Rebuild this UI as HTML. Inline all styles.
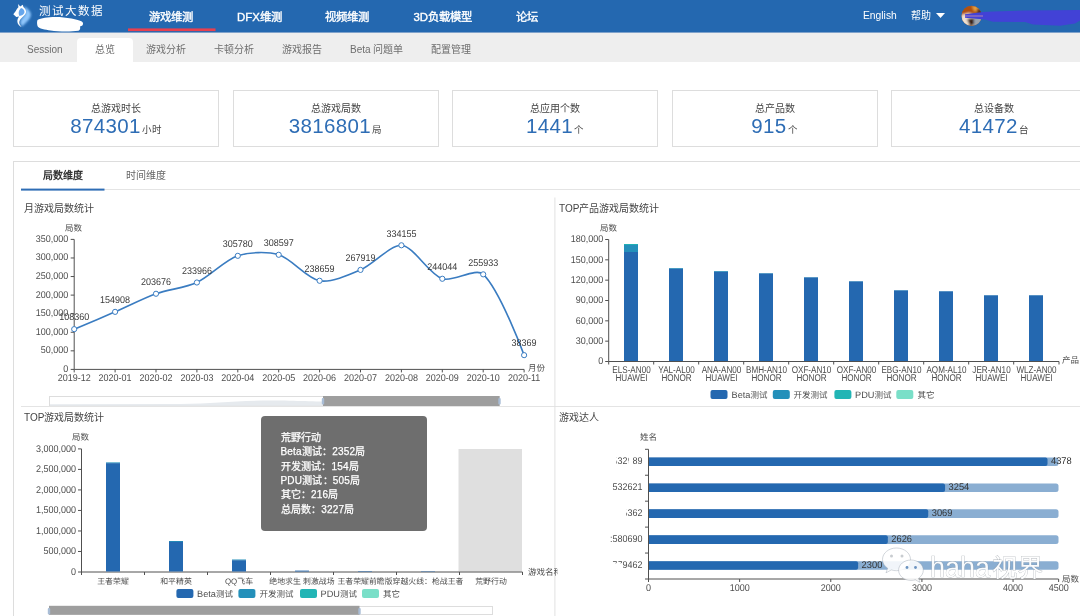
<!DOCTYPE html>
<html lang="zh-CN"><head><meta charset="utf-8"><title>测试大数据</title>
<style>
html,body{margin:0;padding:0}
#root{position:absolute;left:0;top:0;width:1080px;height:616px;will-change:transform}
body{width:1080px;height:616px;overflow:hidden;background:#fff;font-family:"Liberation Sans",sans-serif;position:relative;color:#444}
.abs{position:absolute;white-space:nowrap}
#hdr{left:0;top:0;width:1080px;height:32px;background:#2468b0}
#hdr .nav{color:#fff;font-size:11.3px;font-weight:normal;-webkit-text-stroke:.35px #fff;top:10px;line-height:14px}
#hdr .nav i{font-style:normal;font-size:11.4px}
#sub{left:0;top:32px;width:1080px;height:30px;background:linear-gradient(#7fa2cb 0,#7fa2cb 1px,#eee 1px,#eee 30px)}
#sub .it{font-size:10px;color:#6e6e6e;top:12px;line-height:12px}
.card{top:90px;width:204px;height:55px;border:1px solid #ddd;background:#fff;text-align:center}
.card .t{font-size:10px;color:#444;margin-top:11.500px;line-height:12px}
.card .n{font-size:20.5px;color:#2e6db5;line-height:20px;margin-top:1px;letter-spacing:.35px}
.card .n span{font-size:9.5px;color:#444;margin-left:1px;letter-spacing:0}
svg text{font-family:"Liberation Sans",sans-serif;text-rendering:geometricPrecision}
</style></head><body><div id="root">
<div id="hdr" class="abs">
  <svg class="abs" style="left:0;top:0" width="110" height="32" viewBox="0 0 110 32">
    <defs><radialGradient id="glow" cx="50%" cy="50%" r="50%"><stop offset="0" stop-color="#5fa8ee" stop-opacity=".9"/><stop offset="1" stop-color="#2468b0" stop-opacity="0"/></radialGradient><filter id="b1" x="-30%" y="-30%" width="160%" height="160%"><feGaussianBlur stdDeviation=".9"/></filter><filter id="b0" x="-20%" y="-20%" width="140%" height="140%"><feGaussianBlur stdDeviation=".45"/></filter><filter id="b2" x="-20%" y="-20%" width="140%" height="140%"><feGaussianBlur stdDeviation=".6"/></filter></defs>
    <g transform="translate(8,0)">
      <ellipse cx="15" cy="15" rx="11" ry="13.500" fill="url(#glow)" opacity=".5"/>
      <path d="M15.500 6.500C19 7.500 23.400 11.500 22.800 15.500 22.100 19.800 17 23 14.200 26.600 12.300 24.500 11.800 22 13 20 14.500 17.500 17.500 15.500 17.500 12.500 17.500 10 16.500 8 15.500 6.500z" fill="#8fc6fb" filter="url(#b1)"/>
      <path d="M10.100 4.100L12.200 6.400 14.800 4.800 15.400 7C17.100 8.500 18.400 10.500 18 12.600 17.500 15.100 14.600 16.900 12.900 18.700 11.600 20.100 11.100 21.600 11.300 23.100 11.500 24.600 12.400 25.900 13.600 27.100 11.500 26.400 9.700 24.400 9.400 22.100 9.100 19.600 10.200 17.900 11.200 16.600L8.300 17 5.300 14.300 7.800 10.900C8.500 9.500 9.500 8.200 10.400 7.300z" fill="#fff" filter="url(#b0)"/>
      <path d="M13 7.900C15 8.200 16.600 10 16.500 12.200 16.400 14.200 14 15.400 11.400 15.900 10.600 14.500 10.400 12.500 11.200 10.600 11.700 9.500 12.300 8.600 13 7.900z" fill="#66a6ec" filter="url(#b2)"/>
    </g>
    <path d="M37.5 20c6-3.500 22-4 34-1.500 6 1.200 11 2.500 11.500 4.500.4 2-1 3.200-3 3.500.5 1.500.2 3.500-1.500 4.300-8 1.200-20 1-28-.3-5-.8-12-1.800-13-4.500-.6-2.200-.6-4.500 0-6z" fill="#fff"/>
  </svg>
  <div class="abs" style="left:39px;top:4px;font-size:11.500px;letter-spacing:1.900px;color:#fff;line-height:14px">测试大数据</div>
  <div class="abs nav" style="left:148.500px">游戏维测</div>
  <div class="abs nav" style="left:237px"><i>DFX</i>维测</div>
  <div class="abs nav" style="left:325px">视频维测</div>
  <div class="abs nav" style="left:413.500px"><i>3D</i>负载模型</div>
  <div class="abs nav" style="left:516px">论坛</div>
  <div class="abs" style="left:863px;top:10px;font-size:10.300px;color:#fff;line-height:12px">English</div>
  <div class="abs" style="left:911px;top:10px;font-size:10px;color:#fff;line-height:12px">帮助</div>
  <svg class="abs" style="left:935px;top:12px" width="11" height="7" viewBox="0 0 11 7"><path d="M1 1h9l-4.500 5z" fill="#fff"/></svg>
  <svg class="abs" style="left:955px;top:0" width="125" height="32" viewBox="0 0 125 32">
    <defs><clipPath id="avc"><circle cx="16.600" cy="15.900" r="10.100"/></clipPath><filter id="b3"><feGaussianBlur stdDeviation=".8"/></filter></defs>
    <g clip-path="url(#avc)"><rect x="5" y="4" width="24" height="24" fill="#a85a22"/>
      <g filter="url(#b3)"><path d="M6 6h22v7l-8-2-7 3-7 2z" fill="#b0500f"/><path d="M17 6h8l1 6-7-1z" fill="#e8a040"/><path d="M6 15l8-2 6 3-1 10H6z" fill="#efe0d0"/><path d="M12 19l7-1 2 6-6 2z" fill="#3a2018"/><path d="M19 18l8-2v10h-8z" fill="#9aa4b0"/><path d="M22 8l6 2v7l-6-2z" fill="#5a3020"/></g></g>
    <path d="M10 14.200L28 12 38 11.400 70 10.500 125 10V20.500L120 23.500 105 25.700 78 24.600 70 22 38 21.700 30 19.500 10 17.800z" fill="#4242d6"/>
    <path d="M10 16h18" stroke="#c890b0" stroke-width="1.200" opacity=".7"/>
  </svg>
</div>
<div id="sub" class="abs">
  <div class="abs" style="left:77px;top:6px;width:56px;height:24px;background:#fff;border-radius:4px 4px 0 0"></div>
  <div class="abs it" style="left:27px">Session</div>
  <div class="abs it" style="left:95px">总览</div>
  <div class="abs it" style="left:146px">游戏分析</div>
  <div class="abs it" style="left:214px">卡顿分析</div>
  <div class="abs it" style="left:282px">游戏报告</div>
  <div class="abs it" style="left:350px">Beta 问题单</div>
  <div class="abs it" style="left:431px">配置管理</div>
</div>

<div class="abs card" style="left:13px"><div class="t">总游戏时长</div><div class="n">874301<span>小时</span></div></div>
<div class="abs card" style="left:232.500px"><div class="t">总游戏局数</div><div class="n">3816801<span>局</span></div></div>
<div class="abs card" style="left:452px"><div class="t">总应用个数</div><div class="n">1441<span>个</span></div></div>
<div class="abs card" style="left:671.500px"><div class="t">总产品数</div><div class="n">915<span>个</span></div></div>
<div class="abs card" style="left:891px"><div class="t">总设备数</div><div class="n">41472<span>台</span></div></div>

<div class="abs" style="left:13px;top:161px;width:1100px;height:480px;border:1px solid #ddd;background:#fff"></div>
<div class="abs" style="left:21px;top:189px;width:1059px;height:1px;background:#e4e4e4"></div>
<div class="abs" style="left:42.500px;top:170px;font-size:10px;font-weight:bold;color:#333;line-height:12px">局数维度</div>
<div class="abs" style="left:126.300px;top:170px;font-size:10px;color:#666;line-height:12px">时间维度</div>
<div class="abs" style="left:21px;top:406px;width:1059px;height:1px;background:#e4e4e4"></div>
<div class="abs" style="left:24px;top:203px;font-size:10px;color:#444;line-height:12px">月游戏局数统计</div>
<div class="abs" style="left:559px;top:203px;font-size:10px;color:#444;line-height:12px">TOP产品游戏局数统计</div>
<div class="abs" style="left:24px;top:411.500px;font-size:10px;color:#444;line-height:12px">TOP游戏局数统计</div>
<div class="abs" style="left:559px;top:411.500px;font-size:10px;color:#444;line-height:12px">游戏达人</div>

<svg class="abs" style="left:0;top:0" width="1080" height="616" viewBox="0 0 1080 616">
<rect x="554.400" y="197.500" width="1" height="419" fill="#e2e2e2"/>
<rect x="128" y="28.400" width="87.500" height="2.700" fill="#e8404f"/>
<rect x="21" y="188.600" width="83.500" height="2" fill="#2e6db5"/>
<path d="M74.2 239.4V369.4H524.1" fill="none" stroke="#505050" stroke-width="1"/>
<path d="M70.7 369.40H74.2" stroke="#505050" stroke-width="1"/>
<text transform="translate(68.2 371.9) scale(0.918 1)" font-size="9.8" text-anchor="end" fill="#4d4d4d" font-weight="normal" >0</text>
<path d="M70.7 350.83H74.2" stroke="#505050" stroke-width="1"/>
<text transform="translate(68.2 353.33) scale(0.918 1)" font-size="9.8" text-anchor="end" fill="#4d4d4d" font-weight="normal" >50,000</text>
<path d="M70.7 332.26H74.2" stroke="#505050" stroke-width="1"/>
<text transform="translate(68.2 334.76) scale(0.918 1)" font-size="9.8" text-anchor="end" fill="#4d4d4d" font-weight="normal" >100,000</text>
<path d="M70.7 313.69H74.2" stroke="#505050" stroke-width="1"/>
<text transform="translate(68.2 316.19) scale(0.918 1)" font-size="9.8" text-anchor="end" fill="#4d4d4d" font-weight="normal" >150,000</text>
<path d="M70.7 295.11H74.2" stroke="#505050" stroke-width="1"/>
<text transform="translate(68.2 297.61) scale(0.918 1)" font-size="9.8" text-anchor="end" fill="#4d4d4d" font-weight="normal" >200,000</text>
<path d="M70.7 276.54H74.2" stroke="#505050" stroke-width="1"/>
<text transform="translate(68.2 279.04) scale(0.918 1)" font-size="9.8" text-anchor="end" fill="#4d4d4d" font-weight="normal" >250,000</text>
<path d="M70.7 257.97H74.2" stroke="#505050" stroke-width="1"/>
<text transform="translate(68.2 260.47) scale(0.918 1)" font-size="9.8" text-anchor="end" fill="#4d4d4d" font-weight="normal" >300,000</text>
<path d="M70.7 239.40H74.2" stroke="#505050" stroke-width="1"/>
<text transform="translate(68.2 241.9) scale(0.918 1)" font-size="9.8" text-anchor="end" fill="#4d4d4d" font-weight="normal" >350,000</text>
<path d="M74.2 369.4V372.4" stroke="#505050" stroke-width="1"/>
<text transform="translate(74.2 380.9) scale(0.918 1)" font-size="9.8" text-anchor="middle" fill="#4d4d4d" font-weight="normal" >2019-12</text>
<path d="M115.1 369.4V372.4" stroke="#505050" stroke-width="1"/>
<text transform="translate(115.1 380.9) scale(0.918 1)" font-size="9.8" text-anchor="middle" fill="#4d4d4d" font-weight="normal" >2020-01</text>
<path d="M156.0 369.4V372.4" stroke="#505050" stroke-width="1"/>
<text transform="translate(156.0 380.9) scale(0.918 1)" font-size="9.8" text-anchor="middle" fill="#4d4d4d" font-weight="normal" >2020-02</text>
<path d="M196.89999999999998 369.4V372.4" stroke="#505050" stroke-width="1"/>
<text transform="translate(196.9 380.9) scale(0.918 1)" font-size="9.8" text-anchor="middle" fill="#4d4d4d" font-weight="normal" >2020-03</text>
<path d="M237.8 369.4V372.4" stroke="#505050" stroke-width="1"/>
<text transform="translate(237.8 380.9) scale(0.918 1)" font-size="9.8" text-anchor="middle" fill="#4d4d4d" font-weight="normal" >2020-04</text>
<path d="M278.7 369.4V372.4" stroke="#505050" stroke-width="1"/>
<text transform="translate(278.7 380.9) scale(0.918 1)" font-size="9.8" text-anchor="middle" fill="#4d4d4d" font-weight="normal" >2020-05</text>
<path d="M319.59999999999997 369.4V372.4" stroke="#505050" stroke-width="1"/>
<text transform="translate(319.6 380.9) scale(0.918 1)" font-size="9.8" text-anchor="middle" fill="#4d4d4d" font-weight="normal" >2020-06</text>
<path d="M360.5 369.4V372.4" stroke="#505050" stroke-width="1"/>
<text transform="translate(360.5 380.9) scale(0.918 1)" font-size="9.8" text-anchor="middle" fill="#4d4d4d" font-weight="normal" >2020-07</text>
<path d="M401.4 369.4V372.4" stroke="#505050" stroke-width="1"/>
<text transform="translate(401.4 380.9) scale(0.918 1)" font-size="9.8" text-anchor="middle" fill="#4d4d4d" font-weight="normal" >2020-08</text>
<path d="M442.29999999999995 369.4V372.4" stroke="#505050" stroke-width="1"/>
<text transform="translate(442.3 380.9) scale(0.918 1)" font-size="9.8" text-anchor="middle" fill="#4d4d4d" font-weight="normal" >2020-09</text>
<path d="M483.2 369.4V372.4" stroke="#505050" stroke-width="1"/>
<text transform="translate(483.2 380.9) scale(0.918 1)" font-size="9.8" text-anchor="middle" fill="#4d4d4d" font-weight="normal" >2020-10</text>
<path d="M524.1 369.4V372.4" stroke="#505050" stroke-width="1"/>
<text transform="translate(524.1 380.9) scale(0.918 1)" font-size="9.8" text-anchor="middle" fill="#4d4d4d" font-weight="normal" >2020-11</text>
<text x="65" y="230.5" font-size="8.5" text-anchor="start" fill="#4d4d4d" font-weight="normal" >局数</text>
<text x="528" y="371.2" font-size="8.5" text-anchor="start" fill="#4d4d4d" font-weight="normal" >月份</text>
<path d="M74.20 329.15C74.20 329.15 102.88 317.15 115.10 311.86C127.42 306.53 143.40 298.27 156.00 293.75C167.94 289.46 185.49 287.79 196.90 282.50C210.03 276.41 224.45 260.35 237.80 255.82C248.99 252.03 267.47 251.35 278.70 254.78C292.01 258.83 306.50 278.34 319.60 280.76C331.04 282.87 348.97 274.89 360.50 269.89C373.51 264.25 389.75 245.29 401.40 245.29C414.29 246.68 428.50 273.85 442.30 278.76C453.04 282.57 475.54 267.18 483.20 274.34C500.08 290.10 524.10 355.15 524.10 355.15" fill="none" stroke="#3a7cc1" stroke-width="1.6"/>
<circle cx="74.20" cy="329.15" r="2.6" fill="#fff" stroke="#3a7cc1" stroke-width="1"/>
<text transform="translate(74.2 320.45) scale(0.918 1)" font-size="9.8" text-anchor="middle" fill="#3a3a3a" font-weight="normal" >108360</text>
<circle cx="115.10" cy="311.86" r="2.6" fill="#fff" stroke="#3a7cc1" stroke-width="1"/>
<text transform="translate(115.1 303.16) scale(0.918 1)" font-size="9.8" text-anchor="middle" fill="#3a3a3a" font-weight="normal" >154908</text>
<circle cx="156.00" cy="293.75" r="2.6" fill="#fff" stroke="#3a7cc1" stroke-width="1"/>
<text transform="translate(156.0 285.05) scale(0.918 1)" font-size="9.8" text-anchor="middle" fill="#3a3a3a" font-weight="normal" >203676</text>
<circle cx="196.90" cy="282.50" r="2.6" fill="#fff" stroke="#3a7cc1" stroke-width="1"/>
<text transform="translate(196.9 273.8) scale(0.918 1)" font-size="9.8" text-anchor="middle" fill="#3a3a3a" font-weight="normal" >233966</text>
<circle cx="237.80" cy="255.82" r="2.6" fill="#fff" stroke="#3a7cc1" stroke-width="1"/>
<text transform="translate(237.8 247.12) scale(0.918 1)" font-size="9.8" text-anchor="middle" fill="#3a3a3a" font-weight="normal" >305780</text>
<circle cx="278.70" cy="254.78" r="2.6" fill="#fff" stroke="#3a7cc1" stroke-width="1"/>
<text transform="translate(278.7 246.08) scale(0.918 1)" font-size="9.8" text-anchor="middle" fill="#3a3a3a" font-weight="normal" >308597</text>
<circle cx="319.60" cy="280.76" r="2.6" fill="#fff" stroke="#3a7cc1" stroke-width="1"/>
<text transform="translate(319.6 272.06) scale(0.918 1)" font-size="9.8" text-anchor="middle" fill="#3a3a3a" font-weight="normal" >238659</text>
<circle cx="360.50" cy="269.89" r="2.6" fill="#fff" stroke="#3a7cc1" stroke-width="1"/>
<text transform="translate(360.5 261.19) scale(0.918 1)" font-size="9.8" text-anchor="middle" fill="#3a3a3a" font-weight="normal" >267919</text>
<circle cx="401.40" cy="245.29" r="2.6" fill="#fff" stroke="#3a7cc1" stroke-width="1"/>
<text transform="translate(401.4 236.59) scale(0.918 1)" font-size="9.8" text-anchor="middle" fill="#3a3a3a" font-weight="normal" >334155</text>
<circle cx="442.30" cy="278.76" r="2.6" fill="#fff" stroke="#3a7cc1" stroke-width="1"/>
<text transform="translate(442.3 270.06) scale(0.918 1)" font-size="9.8" text-anchor="middle" fill="#3a3a3a" font-weight="normal" >244044</text>
<circle cx="483.20" cy="274.34" r="2.6" fill="#fff" stroke="#3a7cc1" stroke-width="1"/>
<text transform="translate(483.2 265.64) scale(0.918 1)" font-size="9.8" text-anchor="middle" fill="#3a3a3a" font-weight="normal" >255933</text>
<circle cx="524.10" cy="355.15" r="2.6" fill="#fff" stroke="#3a7cc1" stroke-width="1"/>
<text transform="translate(524.1 346.45) scale(0.918 1)" font-size="9.8" text-anchor="middle" fill="#3a3a3a" font-weight="normal" >38369</text>
<rect x="49.5" y="396.5" width="450" height="9" fill="#fff" stroke="#ddd" stroke-width="1"/>
<path d="M50 405.700L50 404.200L180 404C215 403.500 235 400.600 270 400.600C300 400.600 310 401.800 340 401.800L499 402L499 405.700Z" fill="#e6eaee"/>
<rect x="323" y="396" width="176.5" height="10" fill="#9e9e9e"/>
<rect x="321.8" y="398" width="2.4" height="6.5" rx="1" fill="#a9bdd6"/>
<rect x="498.3" y="398" width="2.4" height="6.5" rx="1" fill="#a9bdd6"/>
<path d="M608.7 239.5V361.5H1059" fill="none" stroke="#505050" stroke-width="1"/>
<path d="M605.2 361.50H608.7" stroke="#505050" stroke-width="1"/>
<text transform="translate(603.2 364.3) scale(0.918 1)" font-size="9.8" text-anchor="end" fill="#4d4d4d" font-weight="normal" >0</text>
<path d="M605.2 341.17H608.7" stroke="#505050" stroke-width="1"/>
<text transform="translate(603.2 343.97) scale(0.918 1)" font-size="9.8" text-anchor="end" fill="#4d4d4d" font-weight="normal" >30,000</text>
<path d="M605.2 320.83H608.7" stroke="#505050" stroke-width="1"/>
<text transform="translate(603.2 323.63) scale(0.918 1)" font-size="9.8" text-anchor="end" fill="#4d4d4d" font-weight="normal" >60,000</text>
<path d="M605.2 300.50H608.7" stroke="#505050" stroke-width="1"/>
<text transform="translate(603.2 303.3) scale(0.918 1)" font-size="9.8" text-anchor="end" fill="#4d4d4d" font-weight="normal" >90,000</text>
<path d="M605.2 280.17H608.7" stroke="#505050" stroke-width="1"/>
<text transform="translate(603.2 282.97) scale(0.918 1)" font-size="9.8" text-anchor="end" fill="#4d4d4d" font-weight="normal" >120,000</text>
<path d="M605.2 259.83H608.7" stroke="#505050" stroke-width="1"/>
<text transform="translate(603.2 262.63) scale(0.918 1)" font-size="9.8" text-anchor="end" fill="#4d4d4d" font-weight="normal" >150,000</text>
<path d="M605.2 239.50H608.7" stroke="#505050" stroke-width="1"/>
<text transform="translate(603.2 242.3) scale(0.918 1)" font-size="9.8" text-anchor="end" fill="#4d4d4d" font-weight="normal" >180,000</text>
<path d="M608.7 361.5V364.5" stroke="#505050" stroke-width="1"/>
<rect x="624.0" y="244" width="14" height="8" fill="#2490ba"/>
<rect x="624.0" y="244" width="14" height="0.9" fill="#22b5b5"/>
<rect x="624.0" y="252" width="14" height="109.0" fill="#2468b0"/>
<text transform="translate(631.5 373.0) scale(0.827 1)" font-size="9.8" text-anchor="middle" fill="#4d4d4d" font-weight="normal" >ELS-AN00</text>
<text transform="translate(631.5 380.6) scale(0.827 1)" font-size="9.8" text-anchor="middle" fill="#4d4d4d" font-weight="normal" >HUAWEI</text>
<path d="M653.7 361.5V364.5" stroke="#505050" stroke-width="1"/>
<rect x="669.0" y="268" width="14" height="0.8000000000000114" fill="#2490ba"/>
<rect x="669.0" y="268.8" width="14" height="92.19999999999999" fill="#2468b0"/>
<text transform="translate(676.5 373.0) scale(0.827 1)" font-size="9.8" text-anchor="middle" fill="#4d4d4d" font-weight="normal" >YAL-AL00</text>
<text transform="translate(676.5 380.6) scale(0.827 1)" font-size="9.8" text-anchor="middle" fill="#4d4d4d" font-weight="normal" >HONOR</text>
<path d="M698.7 361.5V364.5" stroke="#505050" stroke-width="1"/>
<rect x="714.0" y="271" width="14" height="0.8000000000000114" fill="#2490ba"/>
<rect x="714.0" y="271.8" width="14" height="89.19999999999999" fill="#2468b0"/>
<text transform="translate(721.5 373.0) scale(0.827 1)" font-size="9.8" text-anchor="middle" fill="#4d4d4d" font-weight="normal" >ANA-AN00</text>
<text transform="translate(721.5 380.6) scale(0.827 1)" font-size="9.8" text-anchor="middle" fill="#4d4d4d" font-weight="normal" >HUAWEI</text>
<path d="M743.7 361.5V364.5" stroke="#505050" stroke-width="1"/>
<rect x="759.0" y="273" width="14" height="0.6000000000000227" fill="#2490ba"/>
<rect x="759.0" y="273.6" width="14" height="87.39999999999998" fill="#2468b0"/>
<text transform="translate(766.5 373.0) scale(0.827 1)" font-size="9.8" text-anchor="middle" fill="#4d4d4d" font-weight="normal" >BMH-AN10</text>
<text transform="translate(766.5 380.6) scale(0.827 1)" font-size="9.8" text-anchor="middle" fill="#4d4d4d" font-weight="normal" >HONOR</text>
<path d="M788.7 361.5V364.5" stroke="#505050" stroke-width="1"/>
<rect x="804.0" y="277" width="14" height="0.5" fill="#2490ba"/>
<rect x="804.0" y="277.5" width="14" height="83.5" fill="#2468b0"/>
<text transform="translate(811.5 373.0) scale(0.827 1)" font-size="9.8" text-anchor="middle" fill="#4d4d4d" font-weight="normal" >OXF-AN10</text>
<text transform="translate(811.5 380.6) scale(0.827 1)" font-size="9.8" text-anchor="middle" fill="#4d4d4d" font-weight="normal" >HONOR</text>
<path d="M833.7 361.5V364.5" stroke="#505050" stroke-width="1"/>
<rect x="849.0" y="281" width="14" height="0.5" fill="#2490ba"/>
<rect x="849.0" y="281.5" width="14" height="79.5" fill="#2468b0"/>
<text transform="translate(856.5 373.0) scale(0.827 1)" font-size="9.8" text-anchor="middle" fill="#4d4d4d" font-weight="normal" >OXF-AN00</text>
<text transform="translate(856.5 380.6) scale(0.827 1)" font-size="9.8" text-anchor="middle" fill="#4d4d4d" font-weight="normal" >HONOR</text>
<path d="M878.7 361.5V364.5" stroke="#505050" stroke-width="1"/>
<rect x="894.0" y="290" width="14" height="0.5" fill="#2490ba"/>
<rect x="894.0" y="290.5" width="14" height="70.5" fill="#2468b0"/>
<text transform="translate(901.5 373.0) scale(0.827 1)" font-size="9.8" text-anchor="middle" fill="#4d4d4d" font-weight="normal" >EBG-AN10</text>
<text transform="translate(901.5 380.6) scale(0.827 1)" font-size="9.8" text-anchor="middle" fill="#4d4d4d" font-weight="normal" >HONOR</text>
<path d="M923.7 361.5V364.5" stroke="#505050" stroke-width="1"/>
<rect x="939.0" y="291" width="14" height="0.39999999999997726" fill="#2490ba"/>
<rect x="939.0" y="291.4" width="14" height="69.60000000000002" fill="#2468b0"/>
<text transform="translate(946.5 373.0) scale(0.827 1)" font-size="9.8" text-anchor="middle" fill="#4d4d4d" font-weight="normal" >AQM-AL10</text>
<text transform="translate(946.5 380.6) scale(0.827 1)" font-size="9.8" text-anchor="middle" fill="#4d4d4d" font-weight="normal" >HONOR</text>
<path d="M968.7 361.5V364.5" stroke="#505050" stroke-width="1"/>
<rect x="984.0" y="295" width="14" height="0.39999999999997726" fill="#2490ba"/>
<rect x="984.0" y="295.4" width="14" height="65.60000000000002" fill="#2468b0"/>
<text transform="translate(991.5 373.0) scale(0.827 1)" font-size="9.8" text-anchor="middle" fill="#4d4d4d" font-weight="normal" >JER-AN10</text>
<text transform="translate(991.5 380.6) scale(0.827 1)" font-size="9.8" text-anchor="middle" fill="#4d4d4d" font-weight="normal" >HUAWEI</text>
<path d="M1013.7 361.5V364.5" stroke="#505050" stroke-width="1"/>
<rect x="1029.0" y="295" width="14" height="0.39999999999997726" fill="#2490ba"/>
<rect x="1029.0" y="295.4" width="14" height="65.60000000000002" fill="#2468b0"/>
<text transform="translate(1036.5 373.0) scale(0.827 1)" font-size="9.8" text-anchor="middle" fill="#4d4d4d" font-weight="normal" >WLZ-AN00</text>
<text transform="translate(1036.5 380.6) scale(0.827 1)" font-size="9.8" text-anchor="middle" fill="#4d4d4d" font-weight="normal" >HUAWEI</text>
<path d="M1059 361.5V364.5" stroke="#505050" stroke-width="1"/>
<text x="600" y="230.5" font-size="8.5" text-anchor="start" fill="#4d4d4d" font-weight="normal" >局数</text>
<text x="1062" y="362.9" font-size="8.5" text-anchor="start" fill="#4d4d4d" font-weight="normal" >产品</text>
<rect x="710.5" y="390" width="17" height="9" rx="2" fill="#2468b0"/>
<text x="731.5" y="397.8" font-size="8.5" text-anchor="start" fill="#4d4d4d" font-weight="normal" ><tspan font-size="9.2">Beta</tspan>测试</text>
<rect x="772.8" y="390" width="17" height="9" rx="2" fill="#2490ba"/>
<text x="793.5" y="397.8" font-size="8.5" text-anchor="start" fill="#4d4d4d" font-weight="normal" >开发测试</text>
<rect x="834.4" y="390" width="17" height="9" rx="2" fill="#22b5b5"/>
<text x="855" y="397.8" font-size="8.5" text-anchor="start" fill="#4d4d4d" font-weight="normal" ><tspan font-size="9.2">PDU</tspan>测试</text>
<rect x="896.3" y="390" width="17" height="9" rx="2" fill="#7adfc8"/>
<text x="917.5" y="397.8" font-size="8.5" text-anchor="start" fill="#4d4d4d" font-weight="normal" >其它</text>
<g clip-path="url(#clipL)">
<clipPath id="clipL"><rect x="0" y="407" width="557.500" height="209"/></clipPath>
<rect x="458.5" y="449" width="63.5" height="122.500" fill="#dfdfdf"/>
<path d="M81.5 448.9V572H522.5" fill="none" stroke="#505050" stroke-width="1"/>
<path d="M78.0 572.00H81.5" stroke="#505050" stroke-width="1"/>
<text transform="translate(76.0 574.6) scale(0.918 1)" font-size="9.8" text-anchor="end" fill="#4d4d4d" font-weight="normal" >0</text>
<path d="M78.0 551.48H81.5" stroke="#505050" stroke-width="1"/>
<text transform="translate(76.0 554.08) scale(0.918 1)" font-size="9.8" text-anchor="end" fill="#4d4d4d" font-weight="normal" >500,000</text>
<path d="M78.0 530.97H81.5" stroke="#505050" stroke-width="1"/>
<text transform="translate(76.0 533.57) scale(0.918 1)" font-size="9.8" text-anchor="end" fill="#4d4d4d" font-weight="normal" >1,000,000</text>
<path d="M78.0 510.45H81.5" stroke="#505050" stroke-width="1"/>
<text transform="translate(76.0 513.05) scale(0.918 1)" font-size="9.8" text-anchor="end" fill="#4d4d4d" font-weight="normal" >1,500,000</text>
<path d="M78.0 489.93H81.5" stroke="#505050" stroke-width="1"/>
<text transform="translate(76.0 492.53) scale(0.918 1)" font-size="9.8" text-anchor="end" fill="#4d4d4d" font-weight="normal" >2,000,000</text>
<path d="M78.0 469.42H81.5" stroke="#505050" stroke-width="1"/>
<text transform="translate(76.0 472.02) scale(0.918 1)" font-size="9.8" text-anchor="end" fill="#4d4d4d" font-weight="normal" >2,500,000</text>
<path d="M78.0 448.90H81.5" stroke="#505050" stroke-width="1"/>
<text transform="translate(76.0 451.5) scale(0.918 1)" font-size="9.8" text-anchor="end" fill="#4d4d4d" font-weight="normal" >3,000,000</text>
<path d="M81.5 572V575" stroke="#505050" stroke-width="1"/>
<rect x="106.0" y="462.4" width="14" height="1" fill="#2490ba"/>
<rect x="106.0" y="463.2" width="14" height="108.30000000000003" fill="#2468b0"/>
<text x="113.0" y="583.5" font-size="7.9" text-anchor="middle" fill="#4d4d4d" font-weight="normal" >王者荣耀</text>
<path d="M144.5 572V575" stroke="#505050" stroke-width="1"/>
<rect x="169.0" y="541" width="14" height="1" fill="#2490ba"/>
<rect x="169.0" y="541.8" width="14" height="29.7" fill="#2468b0"/>
<text x="176.0" y="583.5" font-size="7.9" text-anchor="middle" fill="#4d4d4d" font-weight="normal" >和平精英</text>
<path d="M207.5 572V575" stroke="#505050" stroke-width="1"/>
<rect x="232.0" y="559.5" width="14" height="1" fill="#2490ba"/>
<rect x="232.0" y="560.3" width="14" height="11.2" fill="#2468b0"/>
<text x="239.0" y="583.5" font-size="7.9" text-anchor="middle" fill="#4d4d4d" font-weight="normal" >QQ飞车</text>
<path d="M270.5 572V575" stroke="#505050" stroke-width="1"/>
<rect x="295.0" y="570.6" width="14" height="0.8999999999999773" fill="#2468b0"/>
<text x="302.0" y="583.5" font-size="7.9" text-anchor="middle" fill="#4d4d4d" font-weight="normal" >绝地求生 刺激战场</text>
<path d="M333.5 572V575" stroke="#505050" stroke-width="1"/>
<rect x="358.0" y="571" width="14" height="0.5" fill="#2468b0"/>
<text x="365.0" y="583.5" font-size="7.9" text-anchor="middle" fill="#4d4d4d" font-weight="normal" >王者荣耀前瞻版</text>
<path d="M396.5 572V575" stroke="#505050" stroke-width="1"/>
<rect x="421.0" y="571.1" width="14" height="0.39999999999997726" fill="#2468b0"/>
<text x="428.0" y="583.5" font-size="7.9" text-anchor="middle" fill="#4d4d4d" font-weight="normal" >穿越火线：枪战王者</text>
<path d="M459.5 572V575" stroke="#505050" stroke-width="1"/>
<text x="491.0" y="583.5" font-size="7.9" text-anchor="middle" fill="#4d4d4d" font-weight="normal" >荒野行动</text>
<path d="M522.5 572V575" stroke="#505050" stroke-width="1"/>
<text x="72" y="440" font-size="8.5" text-anchor="start" fill="#4d4d4d" font-weight="normal" >局数</text>
<text x="528" y="574.5" font-size="8.5" text-anchor="start" fill="#4d4d4d" font-weight="normal" >游戏名称</text>
<rect x="176.4" y="589" width="17" height="9" rx="2" fill="#2468b0"/>
<text x="197" y="596.8" font-size="8.5" text-anchor="start" fill="#4d4d4d" font-weight="normal" ><tspan font-size="9.2">Beta</tspan>测试</text>
<rect x="238.4" y="589" width="17" height="9" rx="2" fill="#2490ba"/>
<text x="259.5" y="596.8" font-size="8.5" text-anchor="start" fill="#4d4d4d" font-weight="normal" >开发测试</text>
<rect x="300" y="589" width="17" height="9" rx="2" fill="#22b5b5"/>
<text x="320.5" y="596.8" font-size="8.5" text-anchor="start" fill="#4d4d4d" font-weight="normal" ><tspan font-size="9.2">PDU</tspan>测试</text>
<rect x="362" y="589" width="17" height="9" rx="2" fill="#7adfc8"/>
<text x="383" y="596.8" font-size="8.5" text-anchor="start" fill="#4d4d4d" font-weight="normal" >其它</text>
<rect x="49.5" y="606.5" width="443" height="8" fill="#fff" stroke="#ddd" stroke-width="1"/>
<rect x="49" y="605.800" width="310.5" height="9" fill="#9e9e9e"/>
<rect x="47.8" y="608" width="2.4" height="6.5" rx="1" fill="#a9bdd6"/>
<rect x="358.3" y="608" width="2.4" height="6.5" rx="1" fill="#a9bdd6"/>
</g>
<path d="M648.5 457.47H1056.0a2.5 2.5 0 0 1 2.5 2.5v3.600a2.5 2.5 0 0 1 -2.5 2.5H648.5Z" fill="#8aaed2"/>
<path d="M648.5 457.47H1045.51a2 2 0 0 1 2 2v4.600a2 2 0 0 1 -2 2H648.5Z" fill="#2468b0"/>
<text transform="translate(1051.01 464.37) scale(0.949 1)" font-size="9.8" text-anchor="start" fill="#333" font-weight="normal" >4378</text>
<text transform="translate(642.5 464.37) scale(0.918 1)" font-size="9.8" text-anchor="end" fill="#4d4d4d" font-weight="normal" >532689</text>
<rect x="610.00" y="456.77" width="6.30" height="10.00" fill="#fff"/>
<rect x="616.30" y="456.77" width="1.70" height="4.50" fill="#fff"/>
<rect x="628.80" y="456.77" width="4.20" height="10.00" fill="#fff"/>
<rect x="627.30" y="460.57" width="1.50" height="6.20" fill="#fff"/>
<path d="M648.5 483.41H1056.0a2.5 2.5 0 0 1 2.5 2.5v3.600a2.5 2.5 0 0 1 -2.5 2.5H648.5Z" fill="#8aaed2"/>
<path d="M648.5 483.41H943.07a2 2 0 0 1 2 2v4.600a2 2 0 0 1 -2 2H648.5Z" fill="#2468b0"/>
<text transform="translate(948.57 490.31) scale(0.949 1)" font-size="9.8" text-anchor="start" fill="#333" font-weight="normal" >3254</text>
<text transform="translate(642.5 490.31) scale(0.918 1)" font-size="9.8" text-anchor="end" fill="#4d4d4d" font-weight="normal" >532621</text>
<path d="M648.5 509.35H1056.0a2.5 2.5 0 0 1 2.5 2.5v3.600a2.5 2.5 0 0 1 -2.5 2.5H648.5Z" fill="#8aaed2"/>
<path d="M648.5 509.35H926.21a2 2 0 0 1 2 2v4.600a2 2 0 0 1 -2 2H648.5Z" fill="#2468b0"/>
<text transform="translate(931.71 516.25) scale(0.949 1)" font-size="9.8" text-anchor="start" fill="#333" font-weight="normal" >3069</text>
<text transform="translate(642.5 516.25) scale(0.918 1)" font-size="9.8" text-anchor="end" fill="#4d4d4d" font-weight="normal" >5362</text>
<rect x="620.00" y="508.65" width="6.20" height="10.00" fill="#fff"/>
<rect x="626.20" y="508.65" width="1.80" height="4.20" fill="#fff"/>
<path d="M648.5 535.29H1056.0a2.5 2.5 0 0 1 2.5 2.5v3.600a2.5 2.5 0 0 1 -2.5 2.5H648.5Z" fill="#8aaed2"/>
<path d="M648.5 535.29H885.83a2 2 0 0 1 2 2v4.600a2 2 0 0 1 -2 2H648.5Z" fill="#2468b0"/>
<text transform="translate(891.33 542.19) scale(0.949 1)" font-size="9.8" text-anchor="start" fill="#333" font-weight="normal" >2626</text>
<text transform="translate(642.5 542.19) scale(0.918 1)" font-size="9.8" text-anchor="end" fill="#4d4d4d" font-weight="normal" >:580690</text>
<path d="M648.5 561.23H1056.0a2.5 2.5 0 0 1 2.5 2.5v3.600a2.5 2.5 0 0 1 -2.5 2.5H648.5Z" fill="#8aaed2"/>
<path d="M648.5 561.23H856.12a2 2 0 0 1 2 2v4.600a2 2 0 0 1 -2 2H648.5Z" fill="#2468b0"/>
<text transform="translate(861.62 568.13) scale(0.949 1)" font-size="9.8" text-anchor="start" fill="#333" font-weight="normal" >2300</text>
<text transform="translate(642.5 568.13) scale(0.918 1)" font-size="9.8" text-anchor="end" fill="#4d4d4d" font-weight="normal" >779462</text>
<rect x="610.00" y="563.33" width="12.80" height="7.20" fill="#fff"/>
<rect x="616.80" y="560.53" width="1.60" height="10.00" fill="#fff"/>
<path d="M648.5 449.3V579H1058.5" fill="none" stroke="#505050" stroke-width="1"/>
<path d="M645.0 449.30H648.5" stroke="#505050" stroke-width="1"/>
<path d="M645.0 475.24H648.5" stroke="#505050" stroke-width="1"/>
<path d="M645.0 501.18H648.5" stroke="#505050" stroke-width="1"/>
<path d="M645.0 527.12H648.5" stroke="#505050" stroke-width="1"/>
<path d="M645.0 553.06H648.5" stroke="#505050" stroke-width="1"/>
<path d="M645.0 579.00H648.5" stroke="#505050" stroke-width="1"/>
<path d="M648.50 579V582" stroke="#505050" stroke-width="1"/>
<text transform="translate(648.5 590.8) scale(0.918 1)" font-size="9.8" text-anchor="middle" fill="#4d4d4d" font-weight="normal" >0</text>
<path d="M739.64 579V582" stroke="#505050" stroke-width="1"/>
<text transform="translate(739.64 590.8) scale(0.918 1)" font-size="9.8" text-anchor="middle" fill="#4d4d4d" font-weight="normal" >1000</text>
<path d="M830.78 579V582" stroke="#505050" stroke-width="1"/>
<text transform="translate(830.78 590.8) scale(0.918 1)" font-size="9.8" text-anchor="middle" fill="#4d4d4d" font-weight="normal" >2000</text>
<path d="M921.92 579V582" stroke="#505050" stroke-width="1"/>
<text transform="translate(921.92 590.8) scale(0.918 1)" font-size="9.8" text-anchor="middle" fill="#4d4d4d" font-weight="normal" >3000</text>
<path d="M1013.06 579V582" stroke="#505050" stroke-width="1"/>
<text transform="translate(1013.06 590.8) scale(0.918 1)" font-size="9.8" text-anchor="middle" fill="#4d4d4d" font-weight="normal" >4000</text>
<path d="M1058.63 579V582" stroke="#505050" stroke-width="1"/>
<text transform="translate(1058.63 590.8) scale(0.918 1)" font-size="9.8" text-anchor="middle" fill="#4d4d4d" font-weight="normal" >4500</text>
<text x="640" y="439.7" font-size="8.5" text-anchor="start" fill="#4d4d4d" font-weight="normal" >姓名</text>
<text x="1062" y="582" font-size="8.5" text-anchor="start" fill="#4d4d4d" font-weight="normal" >局数</text>
</svg>

<div class="abs" style="left:260.500px;top:416px;width:166.500px;height:114.500px;background:#6e6e6e;border-radius:4px"></div>
<div class="abs" style="left:280.500px;top:430.800px;font-size:10px;line-height:14.400px;color:#fff;-webkit-text-stroke:.25px #fff;letter-spacing:.18px">荒野行动<br>Beta测试：2352局<br>开发测试：154局<br>PDU测试：505局<br>其它：216局<br>总局数：3227局</div>

<svg class="abs" style="left:875px;top:540px;overflow:visible" width="175" height="50" viewBox="0 0 175 50">
  <g fill="#fff" fill-opacity=".88" stroke="#9aa4ae" stroke-opacity=".55" stroke-width=".8">
    <path d="M21.500 8c-7.800 0-14 5.100-14 11.400 0 3.600 2 6.700 5.200 8.800l-1.700 4.600 5.300-2.900c1.600.5 3.400.8 5.200.8 7.800 0 14-5.100 14-11.300S29.300 8 21.500 8z"/>
    <path d="M36 20c-6.900 0-12.400 4.600-12.400 10.200S29.100 40.400 36 40.400c1.500 0 3-.2 4.300-.6l4.600 2.500-1.400-4c2.900-1.900 4.800-4.800 4.800-8.100C48.300 24.600 42.800 20 36 20z"/>
  </g>
  <circle cx="16.500" cy="16" r="1.500" fill="#c8ccd0"/><circle cx="27" cy="16" r="1.500" fill="#c8ccd0"/>
  <circle cx="32" cy="27.500" r="1.400" fill="#6b93c0"/><circle cx="40.500" cy="27.500" r="1.400" fill="#6b93c0"/>
  <g fill="#fff" fill-opacity=".95" stroke="#7f8790" stroke-opacity=".6" stroke-width=".7" style="paint-order:stroke"><text transform="translate(55 37.300) scale(.93 1)" font-size="29">haha</text><text x="117" y="37.300" font-size="25.500">视界</text></g>
</svg>
</div></body></html>
